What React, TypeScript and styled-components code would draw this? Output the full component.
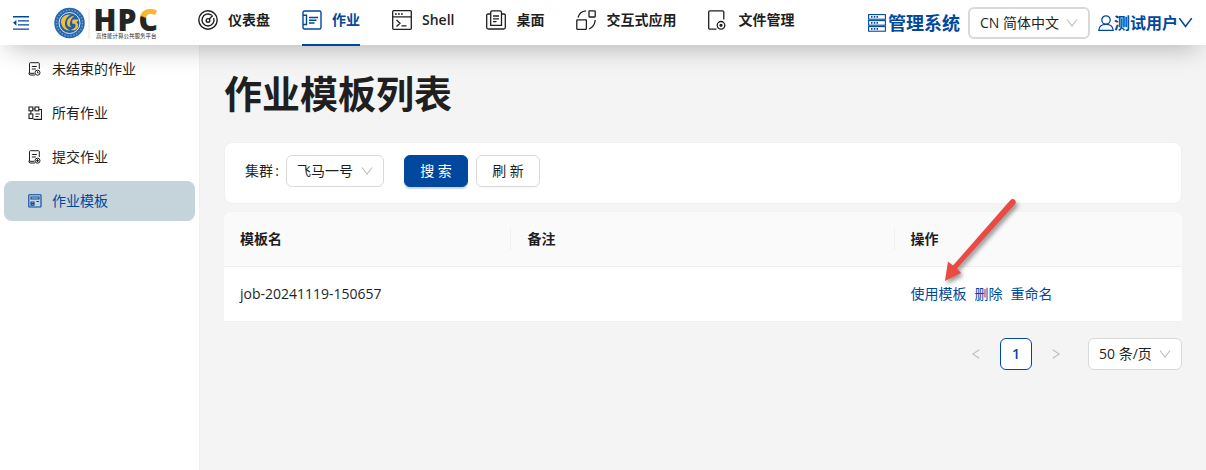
import React from 'react';
import styled, { createGlobalStyle, css } from 'styled-components';

const BLUE = '#00489d';
const TEXT = '#1f1f1f';

const GlobalStyle = createGlobalStyle`
  * { box-sizing: border-box; }
  body {
    margin: 0;
    background: #f4f4f4;
    color: ${TEXT};
    font: 14px/22px "Open Sans", "Noto Sans CJK SC", sans-serif;
  }
  a { color: ${BLUE}; text-decoration: none; }
  button, select { font: inherit; color: inherit; }
`;

const Page = styled.div`
  min-height: 100vh;
  display: flex;
  flex-direction: column;
`;

const Header = styled.header`
  position: relative;
  z-index: 2;
  height: 45px;
  padding: 0 13px 0 12px;
  display: flex;
  align-items: center;
  background: #fff;
  box-shadow: 0 12px 24px -8px rgba(0, 0, 0, 0.25);
`;

const IconButton = styled.button`
  display: flex;
  padding: 0;
  border: 0;
  background: none;
  color: ${BLUE};
  cursor: pointer;
`;

const LogoLink = styled.a`
  display: flex;
  margin-left: 24px;
  svg { overflow: visible; }
`;

const Nav = styled.nav`
  display: flex;
  align-self: stretch;
  gap: 32px;
  margin-left: 39px;
`;

const NavItem = styled.a<{ $active?: boolean }>`
  height: 46px;
  padding-bottom: 4px;
  display: flex;
  align-items: center;
  gap: 10px;
  font-weight: 600;
  white-space: nowrap;
  color: ${p => (p.$active ? BLUE : TEXT)};
  border-bottom: 2px solid ${p => (p.$active ? BLUE : 'transparent')};
`;

const HeaderTools = styled.div`
  margin-left: auto;
  display: flex;
  align-items: center;
  gap: 8px;
  white-space: nowrap;
`;

const SystemLink = styled.a`
  display: flex;
  align-items: center;
  gap: 2px;
  font-size: 18px;
  font-weight: 700;
`;

const UserButton = styled(IconButton)`
  align-items: center;
  font-size: 16px;
  font-weight: 700;
`;

const SelectBox = styled.span<{ $strong?: boolean; $width: number }>`
  position: relative;
  display: inline-flex;
  width: ${p => p.$width}px;
  height: 32px;
  border: ${p => (p.$strong ? 2 : 1)}px solid #d9d9d9;
  border-radius: 6px;
  background: #fff;
  select {
    appearance: none;
    width: 100%;
    padding: 0 0 0 10px;
    border: 0;
    background: none;
    outline: none;
  }
  svg {
    position: absolute;
    right: 10px;
    top: 50%;
    margin-top: -6px;
    color: #bfbfbf;
    pointer-events: none;
  }
`;

const Body = styled.div`
  flex: 1;
  display: flex;
`;

const Sidebar = styled.aside`
  flex: 0 0 200px;
  padding: 4px;
  display: flex;
  flex-direction: column;
  gap: 4px;
  background: #fff;
  border-right: 1px solid #f0f0f0;
`;

const SideItem = styled.a<{ $active?: boolean }>`
  height: 40px;
  padding-left: 24px;
  display: flex;
  align-items: center;
  gap: 10px;
  border-radius: 8px;
  color: ${TEXT};
  ${p => p.$active && css`
    background: #c5d3db;
    color: ${BLUE};
  `}
`;

const Main = styled.main`
  flex: 1;
  min-width: 0;
  padding: 24px;
`;

const Title = styled.h1`
  margin: 0 0 24px;
  font-size: 38px;
  line-height: 49px;
  font-weight: 700;
`;

const Filter = styled.form`
  display: flex;
  align-items: center;
  gap: 8px;
  margin-bottom: 8px;
  padding: 12px 20px 16px;
  background: #fff;
  border: 1px solid #f0f0f0;
  border-radius: 8px;
`;

const Field = styled.label`
  display: flex;
  align-items: center;
  gap: 7px;
  margin-right: 12px;
`;

const Button = styled.button<{ $primary?: boolean }>`
  width: 64px;
  height: 32px;
  padding: 0;
  border: 1px solid ${p => (p.$primary ? BLUE : '#d9d9d9')};
  border-radius: 6px;
  background: ${p => (p.$primary ? BLUE : '#fff')};
  color: ${p => (p.$primary ? '#fff' : TEXT)};
  box-shadow: 0 2px 0 ${p => (p.$primary ? 'rgba(0, 72, 157, 0.2)' : 'rgba(0, 0, 0, 0.02)')};
`;

const Table = styled.table`
  width: 100%;
  table-layout: fixed;
  border-collapse: separate;
  border-spacing: 0;
  th, td {
    padding: 16px;
    text-align: left;
    border-bottom: 1px solid #f0f0f0;
    background: #fff;
  }
  th {
    background: #fafafa;
    font-weight: 600;
  }
  th:first-child { border-top-left-radius: 8px; }
  th:last-child { border-top-right-radius: 8px; }
`;

const HeadCell = styled.th<{ $width: string; $divided?: boolean }>`
  width: ${p => p.$width};
  ${p => p.$divided && css`
    background: linear-gradient(#f0f0f0, #f0f0f0) right center / 1px 22px no-repeat #fafafa !important;
  `}
`;

const Actions = styled.div`
  position: relative;
  display: flex;
  gap: 8px;
  white-space: nowrap;
`;

const Pointer = styled.svg`
  position: absolute;
  left: 26px;
  bottom: 17px;
  pointer-events: none;
  overflow: visible;
`;

const Pager = styled.nav`
  display: flex;
  justify-content: flex-end;
  gap: 8px;
  margin-top: 16px;
`;

const PageButton = styled.button<{ $current?: boolean }>`
  width: 32px;
  height: 32px;
  padding: 0;
  display: flex;
  align-items: center;
  justify-content: center;
  border: 1px solid ${p => (p.$current ? BLUE : 'transparent')};
  border-radius: 6px;
  background: ${p => (p.$current ? '#fff' : 'none')};
  color: ${p => (p.$current ? BLUE : '#bfbfbf')};
  font-weight: 600;
`;

const PageSize = styled.div`
  display: flex;
  margin-left: 8px;
`;

const Icon = ({ size, box = 20, sw = 1.4, children }: { size: number; box?: number; sw?: number; children: React.ReactNode }) => (
  <svg width={size} height={size} viewBox={`0 0 ${box} ${box}`} fill="none" stroke="currentColor" strokeWidth={sw} aria-hidden>
    {children}
  </svg>
);

const Chevron = ({ size = 12, dir = 'down', sw = 1.1 }: { size?: number; dir?: 'down' | 'left' | 'right'; sw?: number }) => (
  <Icon size={size} box={12} sw={sw}>
    <path d={{ down: 'M1 2.5 6 9.2 11 2.5', left: 'M9.3 1.8 2.8 6 9.3 10.2', right: 'M2.7 1.8 9.2 6 2.7 10.2' }[dir]} />
  </Icon>
);

const FoldIcon = () => (
  <svg width="17" height="16" viewBox="0 0 17 16" fill="currentColor" aria-hidden>
    <path d="M1 1h16v1.4H1zM6 5.2h11v1.2H6zM6 9.3h11v1.2H6zM1 13.4h16v1.4H1zM1 7.8 4.4 5v5.8z" />
  </svg>
);

const Logo = () => (
  <svg width="106" height="36" viewBox="0 0 212 72" role="img" aria-label="HPC">
    <defs>
      <linearGradient id="hpcC" gradientUnits="userSpaceOnUse" x1="178" y1="50" x2="194" y2="8">
        <stop offset="0.53" stopColor="#252525" />
        <stop offset="0.6" stopColor="#f4b92f" />
      </linearGradient>
    </defs>
    <circle cx="33" cy="36" r="30.500" fill="#2566ad" />
    <circle cx="33" cy="36" r="26" fill="none" stroke="#6f9bcb" strokeWidth="3" strokeDasharray="3 3" />
    <circle cx="33" cy="36" r="21" fill="#1f5fa8" stroke="#dfe9f4" strokeWidth="2" />
    <path d="M36 19c-15-1-23 9-19 20 3 9 10 13 18 12-8-3-12-8-11-16 1-7 5-13 12-16z" fill="#f4bd3c" />
    <path d="M44 21c-11 2-16 8-16 15 0 6 4 9 9 8-3-2-4-5-3-9 1-5 4-10 10-14z" fill="#f4bd3c" />
    <path d="M40 29h12l-5 6c5 4 4 11-1 14-3 2-7 2-11 1 7-2 11-6 10-10-1-3-3-3-6-2-1-4-1-6 1-9z" fill="#f4bd3c" />
    <path d="M72 9v58" stroke="#e2e2e2" strokeWidth="2" />
    <text y="51" fontFamily="Open Sans, sans-serif" fontWeight="800" fontSize="60" fill="#252525">
      <tspan x="81">H</tspan><tspan x="129">P</tspan><tspan x="171" fill="url(#hpcC)">C</tspan>
    </text>
    <text x="86" y="66" fontFamily="Noto Sans CJK SC, sans-serif" fontSize="11" fill="#222">高性能计算公共服务平台</text>
  </svg>
);

const icons = {
  dashboard: (
    <Icon size={20}><circle cx="10" cy="10" r="9.2" /><path d="M13.8 5.3A6 6 0 1 0 15.7 8" /><circle cx="10" cy="10.4" r="1.8" /><path d="m11.3 9 3.4-3.6" /></Icon>
  ),
  jobs: (
    <Icon size={20}><path d="M1 5V2.5C1 1.6 1.6 1 2.500 1H17.500c.9 0 1.500.6 1.500 1.500V17.500c0 .9-.6 1.500-1.500 1.500H2.500C1.600 19 1 18.400 1 17.500V15M1 5.200h3.500v9.300H1zM7 7.500h9M7 10.200h7.500M7 13h5.500" /></Icon>
  ),
  shell: (
    <Icon size={20} sw={1.3}><rect x=".7" y=".7" width="18.600" height="18.600" rx="1" /><path d="M1 6.800h18M3 4h1.800M6 4h1.800M9 4h1.800M4.500 10l3.500 3.200-3.500 3.200M9.500 15.800h5" /></Icon>
  ),
  desktop: (
    <Icon size={20} sw={1.3}><path d="M5 4H2C1.200 4 .7 4.600 .7 5.300V17.500C.7 18.400 1.300 19 2.200 19H17.800c.9 0 1.500-.6 1.500-1.500V5.300C19.300 4.600 18.800 4 18 4H15.500" /><path d="M4.700 15.300V2.500c0-1 .6-1.700 1.500-1.700H14c.9 0 1.500.7 1.500 1.700v12.800zM7 6h6M7 8.800h6M7 11.600h3.500" /></Icon>
  ),
  apps: (
    <Icon size={20} sw={1.3}><rect x=".8" y="9.800" width="9.600" height="9.500" rx=".5" /><rect x="13" y=".8" width="6.200" height="6.200" rx=".5" /><path d="M2 7.500C3 3.800 5.800 1.300 10 .9M19.200 10c-.3 4.200-2.500 7.500-6.200 9" /></Icon>
  ),
  files: (
    <Icon size={20} sw={1.3}><path d="M8.500 19.200H1.900C1.100 19.200.7 18.700.7 17.900V2C.7 1.200 1.200.8 1.900.8H14.500c.8 0 1.300.5 1.300 1.200V9.500" /><circle cx="13" cy="15.300" r="3.800" /><circle cx="13" cy="15.300" r="1" fill="currentColor" /></Icon>
  ),
  doc: (
    <Icon size={14} box={14} sw={1}><path d="M7 13H2L.8 12M1.500 11V1.500C1.500 1 1.800.7 2.300.7H10.500c.5 0 .8.3.8.8V7M.5 11.300h5.800M3.800 4.500h5M3.800 7h4" /><circle cx="9.500" cy="10.700" r="2.500" /><path d="M9.500 9.300v1.500h1.200" /></Icon>
  ),
  submit: (
    <Icon size={14} box={14} sw={1}><path d="M7 13H2L.8 12M1.500 11V1.500C1.500 1 1.800.7 2.300.7H10.500c.5 0 .8.3.8.8V7M.5 11.300h5.800M3.800 4.500h5M3.800 7h4" /><circle cx="9.500" cy="10.700" r="2.500" /><path d="M8 10.700h3M9.500 9.200v3" /></Icon>
  ),
  all: (
    <Icon size={14} box={14} sw={1.1}><rect x="1" y="1" width="3.800" height="3.800" /><rect x="7" y="1" width="3.800" height="3.800" /><rect x="1" y="8" width="3.800" height="4.500" /><path d="M2.900 5v3M5 3h2M10.800 3.500h2.700v9.900H5.500M7.500 8h4.300M7.500 10.500h3" /></Icon>
  ),
  template: (
    <Icon size={14} box={14} sw={1.1}><rect x=".8" y=".8" width="12.200" height="12.200" rx=".6" /><path d="M3 3h8v2H3zM3 8h3v3.200H3zM3 9.600h3M8.500 7.500h2.500" /></Icon>
  ),
};

const ServerIcon = () => (
  <Icon size={18} box={18} sw={1.1}>
    {[0.6, 6.6, 12.6].map(y => (
      <g key={y}>
        <rect x=".6" y={y} width="16.800" height="4.600" />
        <path d={`M3 ${y + 2.3}h1.500M5.800 ${y + 2.3}h1.500M8.500 ${y + 2.3}h1.500`} strokeWidth="1.600" />
      </g>
    ))}
  </Icon>
);

const UserIcon = () => (
  <Icon size={16} box={16} sw={1.3}>
    <circle cx="8" cy="5" r="4.200" />
    <path d="M.8 15.300C1 11.500 4 9.300 8 9.300s7 2.200 7.200 6z" />
  </Icon>
);

const navItems = [
  { label: '仪表盘', icon: icons.dashboard },
  { label: '作业', icon: icons.jobs, active: true },
  { label: 'Shell', icon: icons.shell },
  { label: '桌面', icon: icons.desktop },
  { label: '交互式应用', icon: icons.apps },
  { label: '文件管理', icon: icons.files },
];

const sideItems = [
  { label: '未结束的作业', icon: icons.doc },
  { label: '所有作业', icon: icons.all },
  { label: '提交作业', icon: icons.submit },
  { label: '作业模板', icon: icons.template, active: true },
];

interface SelectProps { label: string; value: string; width: number; strong?: boolean; id?: string }

const Select = ({ label, value, width, strong, id }: SelectProps) => (
  <SelectBox $width={width} $strong={strong}>
    <select id={id} aria-label={label}><option>{value}</option></select>
    <Chevron />
  </SelectBox>
);

export default function App() {
  return (
    <Page>
      <GlobalStyle />
      <Header>
        <IconButton aria-label="收起菜单"><FoldIcon /></IconButton>
        <LogoLink href="#"><Logo /></LogoLink>
        <Nav>
          {navItems.map(i => (
            <NavItem key={i.label} href="#" $active={i.active}>{i.icon}{i.label}</NavItem>
          ))}
        </Nav>
        <HeaderTools>
          <SystemLink href="#"><ServerIcon />管理系统</SystemLink>
          <Select label="语言" value="CN 简体中文" width={122} strong />
          <UserButton><UserIcon />测试用户<Chevron size={15} sw={1.3} /></UserButton>
        </HeaderTools>
      </Header>
      <Body>
        <Sidebar>
          {sideItems.map(i => (
            <SideItem key={i.label} href="#" $active={i.active}>{i.icon}{i.label}</SideItem>
          ))}
        </Sidebar>
        <Main>
          <Title>作业模板列表</Title>
          <Filter onSubmit={e => e.preventDefault()}>
            <Field htmlFor="cluster">
              <span>集群&thinsp;:</span>
              <Select id="cluster" label="集群" value="飞马一号" width={98} />
            </Field>
            <Button type="submit" $primary>搜 索</Button>
            <Button type="button">刷 新</Button>
          </Filter>
          <Table>
            <thead>
              <tr>
                <HeadCell $width="30%" $divided>模板名</HeadCell>
                <HeadCell $width="40%" $divided>备注</HeadCell>
                <HeadCell $width="30%">操作</HeadCell>
              </tr>
            </thead>
            <tbody>
              <tr>
                <td>job-20241119-150657</td>
                <td />
                <td>
                  <Actions>
                    <a href="#">使用模板</a>
                    <a href="#">删除</a>
                    <a href="#">重命名</a>
                    <Pointer width="80" height="90" viewBox="0 0 80 90" aria-hidden>
                      <path
                        d="M8 83 11 63.500 16 67.500 73.500 2C76-.5 80 2.500 78.500 5.500L20 70.500 24 75z"
                        fill="#e94b44"
                        style={{ filter: 'drop-shadow(2px 3px 2px rgba(0,0,0,.4))' }}
                      />
                    </Pointer>
                  </Actions>
                </td>
              </tr>
            </tbody>
          </Table>
          <Pager aria-label="分页">
            <PageButton aria-label="上一页" disabled><Chevron dir="left" /></PageButton>
            <PageButton $current>1</PageButton>
            <PageButton aria-label="下一页" disabled><Chevron dir="right" /></PageButton>
            <PageSize><Select label="每页条数" value="50 条/页" width={94} /></PageSize>
          </Pager>
        </Main>
      </Body>
    </Page>
  );
}
